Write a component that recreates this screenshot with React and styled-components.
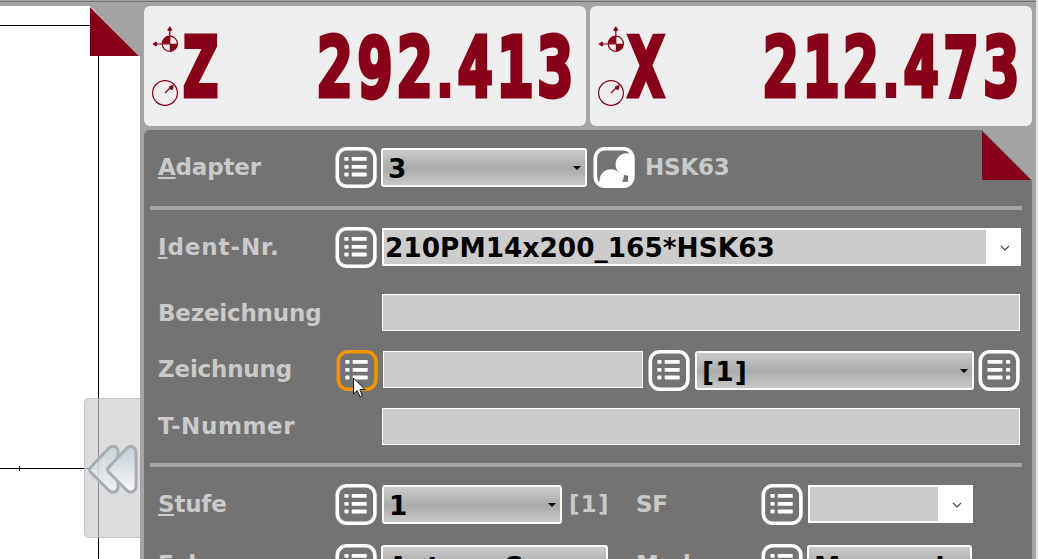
import React from "react";
import styled, { createGlobalStyle } from "styled-components";

const RED = "#880018";

const GlobalStyle = createGlobalStyle`
  * { box-sizing: border-box; }
  body { margin: 0; overflow: hidden; background: #a4a4a4; }
`;

const Screen = styled.div`
  position: relative;
  display: flex;
  width: 1038px;
  height: 559px;
  overflow: hidden;
  padding-top: 6px;
  background: linear-gradient(#a4a4a4 1px, #737373 1px, #737373 2px, #a4a4a4 2px);
  border-right: 2px solid #e4e4e4;
  font-family: "DejaVu Sans", Verdana, sans-serif;
  font-weight: bold;
`;

const Viewport = styled.div`
  position: relative;
  flex: none;
  width: 140px;
  height: 553px;
  background: #fff;
`;

const Drawing = styled.svg`
  display: block;
`;

const CollapseTab = styled.div`
  position: absolute;
  left: 84px;
  top: 392px;
  width: 56px;
  height: 140px;
  padding: 46px 0 0 3px;
  border: 1px solid rgba(185, 185, 185, 0.65);
  border-right: 0;
  border-radius: 5px 0 0 5px;
  background: rgba(205, 205, 205, 0.68);
`;

const Side = styled.div`
  display: flex;
  flex-direction: column;
  gap: 4px;
  width: 888px;
  margin-left: 4px;
`;

const Readouts = styled.div`
  display: flex;
  gap: 4px;
`;

const Readout = styled.div`
  display: flex;
  width: 442px;
  height: 120px;
  padding-left: 7px;
  border-radius: 6px;
  background: #eee;
  color: ${RED};
`;

const AxisIcons = styled.svg`
  flex: none;
`;

const Lcd = styled.div`
  display: flex;
  align-items: baseline;
  justify-content: ${(p) => p.$align || "flex-start"};
  width: ${(p) => p.$width}px;
  height: 60px;
  margin-top: 32px;
  font: bold 59px/60px "DejaVu Sans Mono", monospace;
  -webkit-text-stroke: 3.6px ${RED};
  transform: scaleY(1.38);
`;

const Digit = styled.span`
  width: 40px;
  text-align: center;
`;

const Point = styled.span`
  width: 20px;
  font: bold 42px/60px "DejaVu Sans", sans-serif;
  text-align: center;
  -webkit-text-stroke-width: 3px;
`;

const Panel = styled.div`
  position: relative;
  height: 429px;
  padding-top: 17px;
  background: #737373;
  border-radius: 6px 0 0 0;
  overflow: hidden;
`;

const Fold = styled.svg`
  position: absolute;
  right: 0;
  top: 0;
`;

const Row = styled.div`
  display: flex;
  align-items: center;
  height: 41px;
  margin-top: ${(p) => p.$gap || 0}px;
  padding-left: 14px;
`;

const Label = styled.div`
  flex: none;
  width: ${(p) => p.$width || 177}px;
  margin-left: ${(p) => p.$left || 0}px;
  margin-bottom: ${(p) => p.$raise || 0}px;
  font-size: 23px;
  line-height: 39px;
  letter-spacing: ${(p) => p.$spacing ?? -0.2}px;
  white-space: nowrap;
  color: #cacaca;
`;

const Key = styled.span`
  text-decoration: underline;
  text-decoration-thickness: 2px;
  text-underline-offset: 2px;
  text-decoration-skip-ink: none;
`;

const IconButton = styled.svg`
  flex: none;
  margin-left: ${(p) => p.$left || 0}px;
`;

const Select = styled.div`
  display: flex;
  align-items: center;
  justify-content: space-between;
  flex: none;
  width: ${(p) => p.$width}px;
  height: 39px;
  margin-left: ${(p) => p.$left}px;
  padding: ${(p) => p.$drop || 2}px 4px 0 5px;
  border: 2px solid #fafafa;
  border-radius: 3px;
  background: linear-gradient(#cbcbcb, #ababab 52%, #c8c8c8);
  font-size: 26.4px;
  line-height: 36px;
  letter-spacing: ${(p) => p.$spacing || 0}px;
  color: #000;
  white-space: nowrap;
`;

const Caret = styled.span`
  flex: none;
  margin-top: -1px;
  border: 4px solid transparent;
  border-top-color: #000;
  border-bottom: 0;
`;

const Field = styled.div`
  flex: none;
  width: ${(p) => p.$width}px;
  height: 37px;
  margin-left: ${(p) => p.$left}px;
  margin-bottom: ${(p) => p.$raise || 0}px;
  border: 1px solid #fff;
  background: #ccc;
`;

const Combo = styled.div`
  display: flex;
  flex: none;
  width: ${(p) => p.$width}px;
  height: 38px;
  margin-left: ${(p) => p.$left}px;
  margin-bottom: 1px;
  padding: 2px;
  background: #fff;
`;

const ComboText = styled.div`
  flex: 1;
  padding-left: 1px;
  background: #ccc;
  font-size: 26.4px;
  line-height: 36px;
  color: #000;
  white-space: nowrap;
`;

const ComboArrow = styled.svg`
  flex: none;
`;

const Separator = styled.div`
  width: 872px;
  height: 4px;
  margin: ${(p) => p.$gap}px 0 0 6px;
  background: #a4a4a4;
`;

const Pointer = styled.svg`
  position: absolute;
  left: 352px;
  top: 377px;
`;

function ListButton({ left, active, mirrored }) {
  const dotX = mirrored ? 28 : 9.4;
  const barX = mirrored ? 9.5 : 16.7;
  return (
    <IconButton $left={left} width="42" height="41" viewBox="0 0 42 41">
      <rect x="2.3" y="1.8" width="37.6" height="37.4" rx="9.5" fill="none" stroke={active ? "#f29400" : "#fff"} strokeWidth="3.6" />
      {[10, 17.9, 25.6].map((y) => (
        <g key={y} fill="#fff">
          <rect x={dotX} y={y} width="4.2" height="3.8" rx="0.8" />
          <rect x={barX} y={y} width="15" height="3.8" rx="0.6" />
        </g>
      ))}
    </IconButton>
  );
}

function AdapterButton({ left }) {
  return (
    <IconButton $left={left} width="42" height="41" viewBox="0 0 42 41">
      <clipPath id="inner"><rect x="2" y="2" width="37" height="37" rx="9" /></clipPath>
      <g clipPath="url(#inner)" fill="#fff">
        <circle cx="33.8" cy="17.5" r="11.2" />
        <circle cx="17.8" cy="33.5" r="11.2" />
        <rect x="5" y="34.6" width="33" height="5" />
        <rect x="35" y="24" width="4" height="14" />
      </g>
      <path d="M27 28.2L30 27.7L35 29V34.6H29.5Z" fill="#737373" />
      <path d="M24 27.8L26.500 24.800L31 28.600L30 33.500H28Z" fill="#fff" />
      <rect x="2.3" y="1.8" width="37.6" height="37.4" rx="9.5" fill="none" stroke="#fff" strokeWidth="3.6" />
    </IconButton>
  );
}

function AxisReadout({ axis, value }) {
  return (
    <Readout>
      <AxisIcons width="29" height="120" viewBox="0 0 29 120">
        <g fill="none" stroke={RED}>
          <circle cx="18.8" cy="37.8" r="7.6" fill="#eee" strokeWidth="1.2" />
          <path d="M18.8 38V23M18.8 38H4" strokeWidth="1.2" />
          <circle cx="14" cy="87" r="12.4" strokeWidth="1.2" />
          <path d="M14 87L20.5 80.5" strokeWidth="1.2" />
        </g>
        <g fill={RED}>
          <path d="M18.8 37.8V30.2A7.6 7.6 0 0 0 11.2 37.8ZM18.8 37.8V45.4A7.6 7.6 0 0 0 26.4 37.8Z" />
          <path d="M18.8 20.2L21.4 23.8L20.2 25H17.4L16.2 23.8ZM1.4 38L5 35.4L6.2 36.6V39.4L5 40.6Z" />
          <path d="M22.6 78.6L18 80.4L18.2 82.4L20.3 84L22 83.5Z" />
        </g>
      </AxisIcons>
      <Lcd $width={40}><Digit>{axis}</Digit></Lcd>
      <Lcd $width={355} $align="flex-end">
        {value.split("").map((c, i) => (c === "." ? <Point key={i}>.</Point> : <Digit key={i}>{c}</Digit>))}
      </Lcd>
    </Readout>
  );
}

function ComboBox({ left, width, arrow = 33, children }) {
  return (
    <Combo $left={left} $width={width}>
      <ComboText>{children}</ComboText>
      <ComboArrow width={arrow} height="34" viewBox={`0 0 ${arrow} 34`}>
        <path d="M15 16L19 20L23 16" fill="none" stroke="#444" strokeWidth="1.1" />
      </ComboArrow>
    </Combo>
  );
}

export default function App() {
  return (
    <>
      <GlobalStyle />
      <Screen>
        <Viewport>
          <Drawing width="140" height="553" viewBox="0 0 140 553">
            <path d="M0 19.5H98.5V553M0 462.5H98.5M19.5 460V465" fill="none" stroke="#000" />
            <path d="M90 0H140V50H139Z" fill="#a4a4a4" />
            <path d="M90 1V50H139Z" fill={RED} />
          </Drawing>
          <CollapseTab>
            <svg width="51" height="52" viewBox="0 0 51 52">
              <defs>
                <linearGradient id="arrow" x1="0" y1="0" x2="0" y2="1">
                  <stop offset="0" stopColor="#c2cdd4" />
                  <stop offset="1" stopColor="#f8fafb" />
                </linearGradient>
              </defs>
              <g fill="url(#arrow)" stroke="#a4afb4" strokeWidth="3" strokeLinejoin="round">
                <path fillOpacity="0.75" d="M2.500 22.500Q0.500 24.500 2.500 27L21 45.500Q25 49 29 45.500Q30.500 43 30 40V8Q30.500 5 29 3Q25 -0.500 21 3Z" />
                <path d="M20.500 22.500Q18.500 24.500 20.500 27L39 45.500Q43 49 47 45Q48 43 48 40V8Q48 5 47 3.500Q43 -0.500 39 3Z" />
              </g>
            </svg>
          </CollapseTab>
        </Viewport>
        <Side>
          <Readouts>
            <AxisReadout axis="Z" value="292.413" />
            <AxisReadout axis="X" value="212.473" />
          </Readouts>
          <Panel>
            <Fold width="50" height="50" viewBox="0 0 50 50">
              <path d="M0 0H50V50Z" fill="#a4a4a4" />
              <path d="M0 1V50H49Z" fill={RED} />
            </Fold>
            <Row>
              <Label><Key>A</Key>dapter</Label>
              <ListButton />
              <Select $left={4} $width={206}>3<Caret /></Select>
              <AdapterButton left={6} />
              <Label $left={10}>HSK63</Label>
            </Row>
            <Separator $gap={18} />
            <Row $gap={17}>
              <Label $spacing={0.9}><Key>I</Key>dent-Nr.</Label>
              <ListButton />
              <ComboBox left={5} width={639}>210PM14x200_165*HSK63</ComboBox>
            </Row>
            <Row $gap={24}>
              <Label $raise={-2}>Bezeichnung</Label>
              <Field $left={47} $width={638} />
            </Row>
            <Row $gap={17}>
              <Label $width={178} $raise={2}>Zeichnung</Label>
              <ListButton active />
              <Field $left={5} $width={260} $raise={2} />
              <ListButton left={5} />
              <Select $left={5} $width={279} $spacing={1.2}>[1]<Caret /></Select>
              <ListButton left={4} mirrored />
            </Row>
            <Row $gap={15}>
              <Label $spacing={0.6}>T-Nummer</Label>
              <Field $left={47} $width={638} />
            </Row>
            <Separator $gap={16} />
            <Row $gap={17}>
              <Label><Key>S</Key>tufe</Label>
              <ListButton />
              <Select $left={5} $width={180}>1<Caret /></Select>
              <Label $left={7} $width={67} $spacing={1.2}>[1]</Label>
              <Label $width={125}>SF</Label>
              <ListButton />
              <ComboBox left={5} width={165} />
            </Row>
            <Row $gap={19}>
              <Label>Fokus</Label>
              <ListButton />
              <Select $left={4} $width={227} $drop={4}>Autom. S<Caret /></Select>
              <Label $left={28} $width={125}>Modus</Label>
              <ListButton />
              <Select $left={4} $width={165} $drop={4}>Messen h</Select>
            </Row>
          </Panel>
        </Side>
        <Pointer width="14" height="22" viewBox="0 0 14 22">
          <path d="M1.500 1V17L5.200 13.500L8 19.800L10.500 18.700L7.800 12.500H13Z" fill="#fff" stroke="#111" />
        </Pointer>
      </Screen>
    </>
  );
}
